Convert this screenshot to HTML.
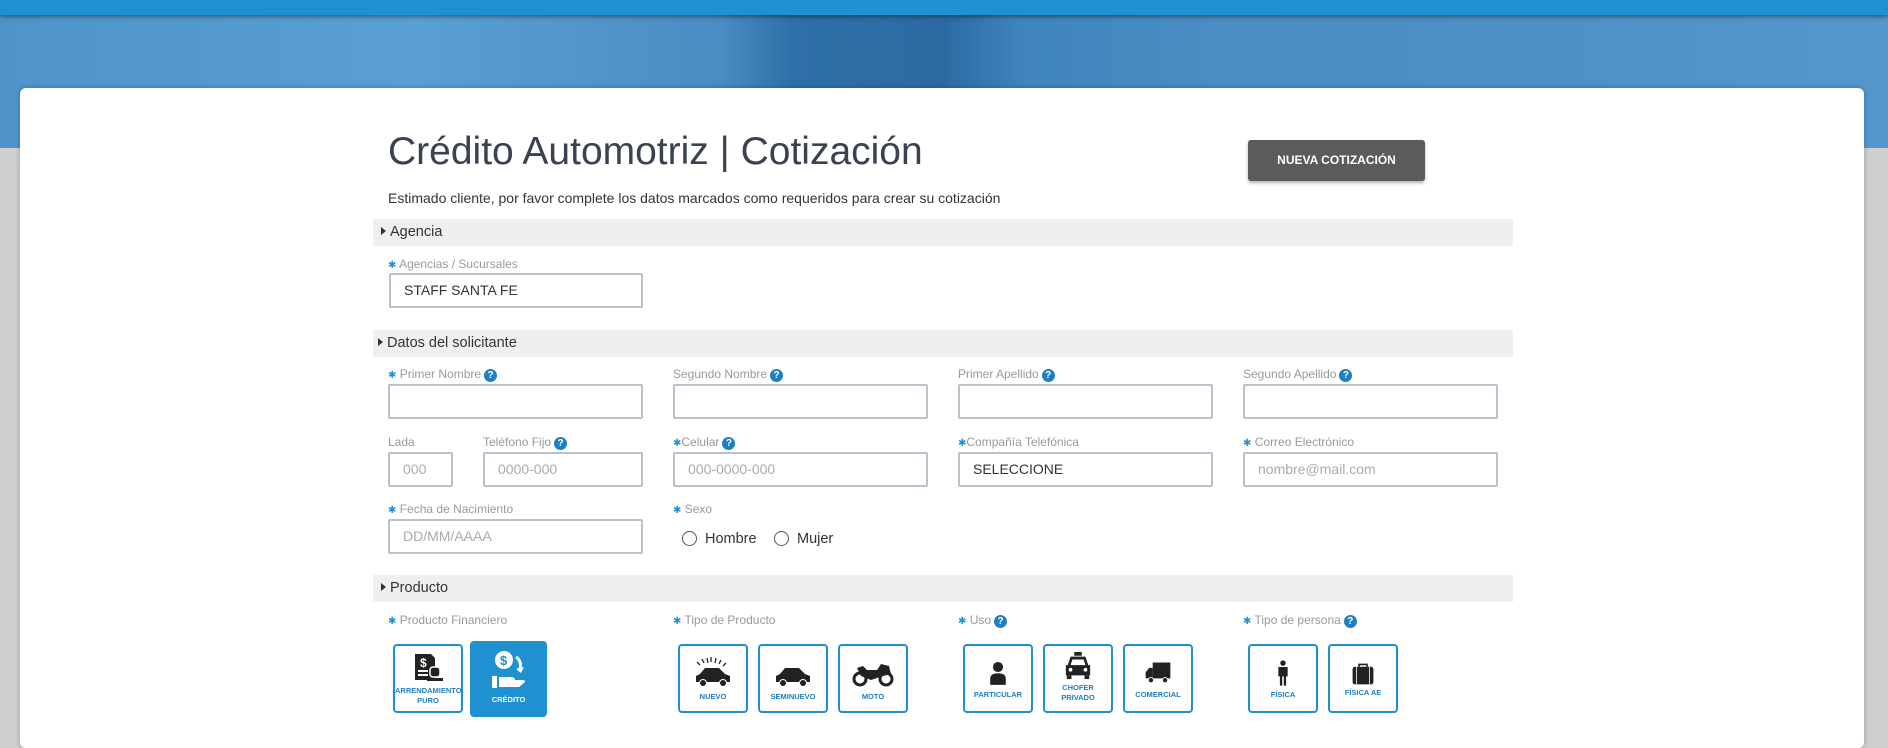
<!DOCTYPE html>
<html><head><meta charset="utf-8">
<style>
*{box-sizing:border-box;margin:0;padding:0}
body{width:1888px;height:736px;overflow:hidden;background:#cfcfcf;font-family:"Liberation Sans",sans-serif;position:relative}
.top{position:absolute;left:0;top:0;width:1888px;height:15px;background:#1f90d0;box-shadow:0 2px 4px rgba(0,0,0,.4);z-index:2}
.hero{position:absolute;left:0;top:15px;width:1888px;height:133px;background:linear-gradient(90deg,#4f94c8 0%,#5a9fd2 22%,#4a8dc4 38%,#2f6fa8 42%,#2c6aa3 50%,#3f84bd 54%,#4a8ec4 65%,#4d90c6 80%,#5497cb 100%)}
.card{position:absolute;left:20px;top:88px;width:1844px;height:660px;background:#fff;border-radius:6px;box-shadow:0 0 6px rgba(0,0,0,.25)}
h1{position:absolute;left:388px;top:130px;font-size:39px;font-weight:normal;color:#3a4150}
.btn{position:absolute;left:1248px;top:140px;width:177px;height:41px;background:#5b5b5b;border-radius:3px;color:#fff;font-size:12px;font-weight:bold;text-align:center;line-height:41px;box-shadow:0 2px 3px rgba(0,0,0,.3)}
.sub{position:absolute;left:388px;top:190px;font-size:14px;color:#333}
.bar{position:absolute;left:373px;width:1140px;height:27px;background:#efefef;font-size:14.5px;color:#333;line-height:27px;padding-left:8px}
.bar:before{content:"";display:inline-block;border-left:5px solid #333;border-top:4px solid transparent;border-bottom:4px solid transparent;margin-right:4px;vertical-align:1px}
.lbl{position:absolute;font-size:12px;color:#999;line-height:14px}
.st{color:#1f90d0;font-size:10px}
.q{display:inline-block;width:13px;height:13px;border-radius:50%;background:#1f7fc4;color:#fff;font-size:10px;font-weight:bold;text-align:center;line-height:13px;margin-left:3px}
.in{position:absolute;height:35px;border:2px solid #b9c1cc;border-radius:2px;font-size:14px;color:#333;line-height:31px;padding-left:13px}
.ph{color:#aaa}
.rad{position:absolute;font-size:14.5px;color:#333;line-height:18px}
.rad i{display:inline-block;width:15px;height:15px;border:1.5px solid #555;border-radius:50%;vertical-align:-3px;margin-right:8px}
.box{position:absolute;top:644px;width:70px;height:69px;border:2px solid #1f8fd0;border-radius:4px;text-align:center;font-size:7.5px;font-weight:bold;color:#1f7fc4;line-height:10px}
.box svg{display:block;margin:6px auto 2px}
.box.sel{background:#1f90d0;color:#fff;border-color:#1f90d0;top:641px;height:76px;width:77px}
</style></head><body>
<div class="top"></div>
<div class="hero"></div>
<div class="card"></div>
<h1>Crédito Automotriz | Cotización</h1>
<div class="btn">NUEVA COTIZACIÓN</div>
<div class="sub">Estimado cliente, por favor complete los datos marcados como requeridos para crear su cotización</div>

<div class="bar" style="top:219px">Agencia</div>
<div class="lbl" style="left:388px;top:257px"><span class="st">✱</span> Agencias / Sucursales</div>
<div class="in" style="left:389px;top:273px;width:254px">STAFF SANTA FE</div>

<div class="bar" style="top:330px;padding-left:5px">Datos del solicitante</div>
<div class="lbl" style="left:388px;top:367px"><span class="st">✱</span> Primer Nombre<span class="q">?</span></div>
<div class="lbl" style="left:673px;top:367px">Segundo Nombre<span class="q">?</span></div>
<div class="lbl" style="left:958px;top:367px">Primer Apellido<span class="q">?</span></div>
<div class="lbl" style="left:1243px;top:367px">Segundo Apellido<span class="q">?</span></div>
<div class="in" style="left:388px;top:384px;width:255px"></div>
<div class="in" style="left:673px;top:384px;width:255px"></div>
<div class="in" style="left:958px;top:384px;width:255px"></div>
<div class="in" style="left:1243px;top:384px;width:255px"></div>

<div class="lbl" style="left:388px;top:435px">Lada</div>
<div class="lbl" style="left:483px;top:435px">Teléfono Fijo<span class="q">?</span></div>
<div class="lbl" style="left:673px;top:435px"><span class="st">✱</span>Celular<span class="q">?</span></div>
<div class="lbl" style="left:958px;top:435px"><span class="st">✱</span>Compañía Telefónica</div>
<div class="lbl" style="left:1243px;top:435px"><span class="st">✱</span> Correo Electrónico</div>
<div class="in ph" style="left:388px;top:452px;width:65px">000</div>
<div class="in ph" style="left:483px;top:452px;width:160px">0000-000</div>
<div class="in ph" style="left:673px;top:452px;width:255px">000-0000-000</div>
<div class="in" style="left:958px;top:452px;width:255px">SELECCIONE</div>
<div class="in ph" style="left:1243px;top:452px;width:255px">nombre@mail.com</div>

<div class="lbl" style="left:388px;top:502px"><span class="st">✱</span> Fecha de Nacimiento</div>
<div class="lbl" style="left:673px;top:502px"><span class="st">✱</span> Sexo</div>
<div class="in ph" style="left:388px;top:519px;width:255px">DD/MM/AAAA</div>
<div class="rad" style="left:682px;top:530px"><i></i>Hombre</div>
<div class="rad" style="left:774px;top:530px"><i></i>Mujer</div>

<div class="bar" style="top:575px">Producto</div>
<div class="lbl" style="left:388px;top:613px"><span class="st">✱</span> Producto Financiero</div>
<div class="lbl" style="left:673px;top:613px"><span class="st">✱</span> Tipo de Producto</div>
<div class="lbl" style="left:958px;top:613px"><span class="st">✱</span> Uso<span class="q">?</span></div>
<div class="lbl" style="left:1243px;top:613px"><span class="st">✱</span> Tipo de persona<span class="q">?</span></div>

<div class="box" style="left:393px"><svg width="34" height="32" viewBox="0 0 34 32"><path d="M4 2h16l4 4v22H4z" fill="#222"/><text x="9" y="15" font-size="12" font-weight="bold" fill="#fff" font-family="Liberation Sans">$</text><path d="M7 19h10M7 23h10" stroke="#fff" stroke-width="2"/><rect x="19" y="15" width="10" height="10" rx="3" fill="#222" stroke="#fff" stroke-width="1.5"/><rect x="16" y="26" width="16" height="3" fill="#222"/></svg>ARRENDAMIENTO<br>PURO</div>
<div class="box sel" style="left:470px"><svg width="40" height="44" viewBox="0 0 40 44"><circle cx="15" cy="11" r="9" fill="#fff"/><text x="11" y="16" font-size="13" font-weight="bold" fill="#1f90d0" font-family="Liberation Sans">$</text><path d="M27 8q6 4 4 12" stroke="#fff" stroke-width="3" fill="none"/><path d="M27 20l5 4 3-6z" fill="#fff"/><rect x="3" y="27" width="5" height="12" fill="#fff"/><path d="M10 28h12q4 0 4 3h8q2 0 2 2l-6 5H10z" fill="#fff"/></svg>CRÉDITO</div>

<div class="box" style="left:678px"><svg width="42" height="34" viewBox="0 0 42 34" style="margin-top:10px"><path d="M5 6l3 3M10 3l2 4M15 2l1 5M19 1v5M24 2l-1 5M29 4l-2 4M34 7l-3 3" stroke="#222" stroke-width="1.3"/><path d="M4 26v-6l4-2 5-6h14l6 6 5 2v6z" fill="#222"/><circle cx="11" cy="27" r="3.5" fill="#222" stroke="#fff"/><circle cx="31" cy="27" r="3.5" fill="#222" stroke="#fff"/></svg>NUEVO</div>
<div class="box" style="left:758px"><svg width="42" height="34" viewBox="0 0 42 34" style="margin-top:10px"><path d="M4 26v-6l4-2 5-6h14l6 6 5 2v6z" fill="#222"/><circle cx="11" cy="27" r="3.5" fill="#222" stroke="#fff"/><circle cx="31" cy="27" r="3.5" fill="#222" stroke="#fff"/></svg>SEMINUEVO</div>
<div class="box" style="left:838px"><svg width="44" height="34" viewBox="0 0 44 34" style="margin-top:10px"><path d="M6 12l6-2 4 4h10l4-6 8 2 2 8-8 2-12 4-10-4z" fill="#222"/><circle cx="9" cy="23" r="6" fill="none" stroke="#222" stroke-width="3"/><circle cx="35" cy="23" r="6" fill="none" stroke="#222" stroke-width="3"/></svg>MOTO</div>

<div class="box" style="left:963px"><svg width="24" height="28" viewBox="0 0 30 36" style="margin-top:14px"><circle cx="15" cy="9" r="6.5" fill="#222"/><path d="M5 32v-8q0-7 10-7t10 7v8z" fill="#222"/></svg>PARTICULAR</div>
<div class="box" style="left:1043px"><svg width="28" height="30" viewBox="0 0 30 32" style="margin-top:5px"><rect x="11" y="1" width="8" height="4" fill="#222"/><path d="M7 6h16l3 9h2v11H2V15h2z" fill="#222"/><path d="M9 9h12l2 6H7z" fill="#fff"/><circle cx="7" cy="20" r="2" fill="#fff"/><circle cx="23" cy="20" r="2" fill="#fff"/><rect x="3" y="26" width="5" height="4" fill="#222"/><rect x="22" y="26" width="5" height="4" fill="#222"/></svg>CHOFER<br>PRIVADO</div>
<div class="box" style="left:1123px"><svg width="30" height="28" viewBox="0 0 34 30" style="margin-top:14px"><rect x="11" y="2" width="20" height="18" fill="#222"/><path d="M3 20v-7l4-5h4v12z" fill="#222"/><circle cx="9" cy="22" r="3" fill="#222" stroke="#fff"/><circle cx="25" cy="22" r="3" fill="#222" stroke="#fff"/></svg>COMERCIAL</div>

<div class="box" style="left:1248px"><svg width="16" height="28" viewBox="0 0 20 36" style="margin-top:14px"><circle cx="10" cy="4" r="3.5" fill="#222"/><path d="M4 9h12v12h-2v12h-3V21h-2v12H6V21H4z" fill="#222"/></svg>FÍSICA</div>
<div class="box" style="left:1328px"><svg width="26" height="24" viewBox="0 0 30 30" style="margin-top:16px"><path d="M10 6V3h10v3" stroke="#222" stroke-width="2" fill="none"/><rect x="2" y="6" width="26" height="22" rx="3" fill="#222"/><path d="M7 6v22M23 6v22" stroke="#fff" stroke-width="1"/></svg>FÍSICA AE</div>
</body></html>
